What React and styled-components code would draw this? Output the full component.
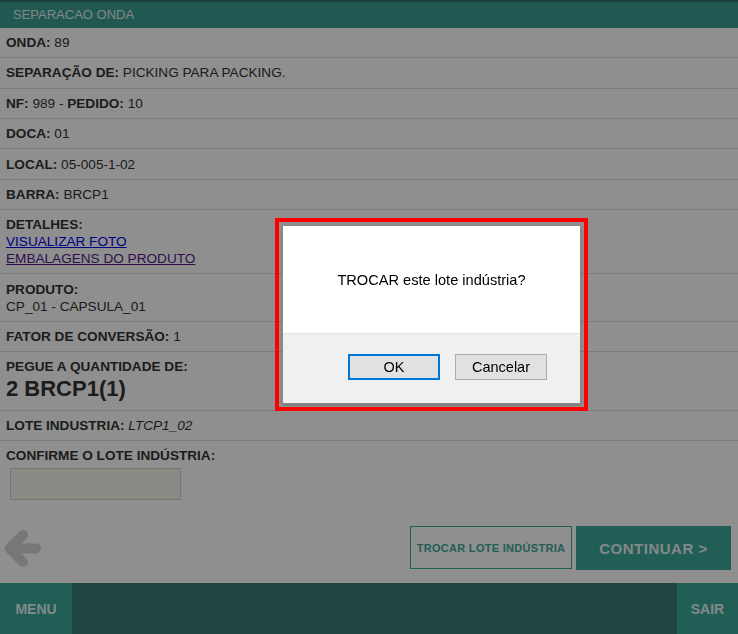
import React from "react";
import styled, { createGlobalStyle } from "styled-components";

const Global = createGlobalStyle`
  html, body { margin: 0; padding: 0; height: 100%; }
  body { font-family: "Liberation Sans", Arial, sans-serif; background: #ffffff; color: #333; }
  #root { height: 100%; }
`;

const Page = styled.div`
  display: flex;
  flex-direction: column;
  height: 100vh;
  background: #ffffff;
`;

const Header = styled.div`
  border-top: 2px solid #2f7167;
  background: #3c9e90;
  height: 26px;
  display: flex;
  align-items: center;
  padding-left: 13px;
  font-size: 13px;
  color: rgba(255, 255, 255, 0.88);
`;

const Row = styled.div`
  padding: 6.2px 6px;
  line-height: 17px;
  font-size: 13.6px;
  color: #333;
  border-bottom: ${(p) => (p.$last ? "none" : "1px solid #dedede")};
`;

const Label = styled.b`
  font-weight: bold;
`;

const Italic = styled.i`
  font-style: italic;
`;

const Link = styled.a`
  display: block;
  color: ${(p) => (p.$visited ? "#551a8b" : "#0000ee")};
  text-decoration: underline;
`;

const Big = styled.div`
  font-size: 22px;
  font-weight: bold;
  line-height: 28px;
`;

const Input = styled.div`
  margin: 4px 0 0 4px;
  width: 169px;
  height: 30px;
  border: 1px solid #d2d2d2;
  background: #f6f6ec;
`;

const Spacer = styled.div`
  flex: 1;
`;

const ActionBar = styled.div`
  display: flex;
  align-items: center;
  padding: 20px 7px 13px 4px;
`;

const BackIcon = styled.svg`
  width: 38px;
  height: 39px;
  display: block;
`;

const Actions = styled.div`
  margin-left: auto;
  display: flex;
  gap: 4px;
  align-items: flex-start;
`;

const OutlineButton = styled.button`
  width: 162px;
  height: 43px;
  border: 1px solid #3ca898;
  background: transparent;
  color: #3ca898;
  font-family: "Liberation Sans", Arial, sans-serif;
  font-size: 11px;
  font-weight: bold;
  letter-spacing: 0.3px;
  white-space: nowrap;
  padding: 0;
`;

const SolidButton = styled.button`
  width: 155px;
  height: 44px;
  border: none;
  background: #3ca898;
  color: rgba(255, 255, 255, 0.9);
  font-family: "Liberation Sans", Arial, sans-serif;
  font-size: 15px;
  font-weight: bold;
  letter-spacing: 0.5px;
  white-space: nowrap;
  padding: 0;
`;

const Footer = styled.div`
  height: 51px;
  background: #377b70;
  display: flex;
  justify-content: space-between;
`;

const FooterButton = styled.div`
  width: ${(p) => p.$w}px;
  background: #3ca898;
  display: flex;
  align-items: center;
  justify-content: center;
  font-size: 14px;
  font-weight: bold;
  color: rgba(255, 255, 255, 0.9);
`;

const Backdrop = styled.div`
  position: fixed;
  inset: 0;
  background: rgba(0, 0, 0, 0.44);
`;

const Highlight = styled.div`
  position: fixed;
  left: 275px;
  top: 218px;
  border: 4px solid #ff0000;
  padding: 3px;
`;

const Dialog = styled.div`
  width: 297px;
  height: 177px;
  border: 1px solid #8a8a8a;
  border-radius: 2px;
  background: #f0f0f0;
  display: flex;
  flex-direction: column;
  overflow: hidden;
  box-shadow: 0 1px 3px rgba(0, 0, 0, 0.2);
`;

const DialogBody = styled.div`
  height: 108px;
  background: #ffffff;
  border-bottom: 1px solid #e3e3e3;
  display: flex;
  align-items: center;
  justify-content: center;
  font-size: 14.6px;
  color: #000;
  padding-top: 1px;
  box-sizing: border-box;
`;

const DialogButtons = styled.div`
  display: flex;
  justify-content: flex-end;
  gap: 15px;
  padding: 20px 33px 0 0;
`;

const DialogButton = styled.button`
  width: 92px;
  height: 26px;
  box-sizing: border-box;
  background: #e1e1e1;
  border: ${(p) => (p.$primary ? "2px solid #0078d7" : "1px solid #adadad")};
  font-family: "Liberation Sans", Arial, sans-serif;
  font-size: 14.5px;
  color: #000;
  padding: 0;
`;

export default function App() {
  return (
    <>
      <Global />
      <Page>
        <Header>SEPARACAO ONDA</Header>
        <Row><Label>ONDA:</Label> 89</Row>
        <Row><Label>SEPARAÇÃO DE:</Label> PICKING PARA PACKING.</Row>
        <Row><Label>NF:</Label> 989 - <Label>PEDIDO:</Label> 10</Row>
        <Row><Label>DOCA:</Label> 01</Row>
        <Row><Label>LOCAL:</Label> 05-005-1-02</Row>
        <Row><Label>BARRA:</Label> BRCP1</Row>
        <Row>
          <Label>DETALHES:</Label>
          <Link href="#">VISUALIZAR FOTO</Link>
          <Link href="#" $visited>EMBALAGENS DO PRODUTO</Link>
        </Row>
        <Row>
          <Label>PRODUTO:</Label>
          <div>CP_01 - CAPSULA_01</div>
        </Row>
        <Row><Label>FATOR DE CONVERSÃO:</Label> 1</Row>
        <Row>
          <Label>PEGUE A QUANTIDADE DE:</Label>
          <Big>2 BRCP1(1)</Big>
        </Row>
        <Row><Label>LOTE INDUSTRIA:</Label> <Italic>LTCP1_02</Italic></Row>
        <Row $last>
          <Label>CONFIRME O LOTE INDÚSTRIA:</Label>
          <Input />
        </Row>
        <Spacer />
        <ActionBar>
          <BackIcon viewBox="0 0 38 39">
            <path
              d="M32 19.5 H7 M19 6 L5.5 19.5 L19 33"
              fill="none"
              stroke="#d4d4d4"
              strokeWidth="10"
              strokeLinecap="round"
              strokeLinejoin="round"
            />
          </BackIcon>
          <Actions>
            <OutlineButton>TROCAR LOTE INDÚSTRIA</OutlineButton>
            <SolidButton>CONTINUAR &gt;</SolidButton>
          </Actions>
        </ActionBar>
        <Footer>
          <FooterButton $w={72}>MENU</FooterButton>
          <FooterButton $w={61}>SAIR</FooterButton>
        </Footer>
      </Page>
      <Backdrop />
      <Highlight>
        <Dialog>
          <DialogBody>TROCAR este lote indústria?</DialogBody>
          <DialogButtons>
            <DialogButton $primary>OK</DialogButton>
            <DialogButton>Cancelar</DialogButton>
          </DialogButtons>
        </Dialog>
      </Highlight>
    </>
  );
}
